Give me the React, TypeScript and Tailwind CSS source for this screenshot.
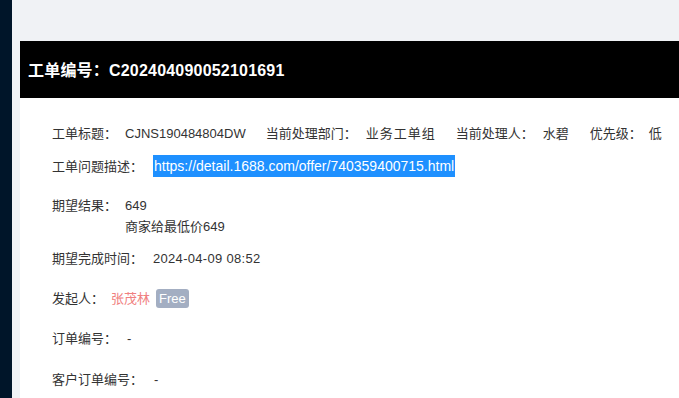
import React from "react";

const font = { fontFamily: '"Liberation Sans", "Noto Sans CJK SC", sans-serif' };

function Pair({ label, value, gap = "ml-[8px]" }: { label: string; value: React.ReactNode; gap?: string }) {
  return (
    <div className="flex items-center whitespace-nowrap">
      <span>{label}</span>
      <span className={gap}>{value}</span>
    </div>
  );
}

export default function App() {
  return (
    <div className="flex h-[398px] w-[679px] overflow-hidden bg-[#f0f2f5] text-[13px] leading-[21px] text-[#333]" style={font}>
      <div className="h-full w-[12px] shrink-0 bg-[#001529]" />
      <div className="flex min-w-0 flex-1 flex-col pl-[8px] pt-[41px]">
        <div className="flex h-[57px] w-[700px] shrink-0 items-center bg-black pl-[8px] pt-[2px] text-[16px] font-bold tracking-[0.2px] text-white">
          工单编号：C202404090052101691
        </div>
        <div className="w-[700px] flex-1 bg-white pl-[32px] pt-[25px]">
          <div className="flex items-center whitespace-nowrap">
            <Pair label="工单标题：" value="CJNS190484804DW" />
            <div className="ml-[20px]">
              <Pair label="当前处理部门：" value="业务工单组" gap="ml-[9px] tracking-[1px]" />
            </div>
            <div className="ml-[20px]">
              <Pair label="当前处理人：" value="水碧" gap="ml-[9px]" />
            </div>
            <div className="ml-[21px]">
              <Pair label="优先级：" value="低" gap="ml-[7px]" />
            </div>
          </div>
          <div className="mt-[11px] flex items-center whitespace-nowrap">
            <span>工单问题描述：</span>
            <span className="ml-[10px] bg-[#1e90ff] pl-[1px] pr-[1px] text-[14px] leading-[22px] text-white">
              https://detail.1688.com/offer/740359400715.html
            </span>
          </div>
          <div className="mt-[18px] flex whitespace-nowrap">
            <span>期望结果：</span>
            <div className="ml-[8px] flex flex-col">
              <span>649</span>
              <span>商家给最低价649</span>
            </div>
          </div>
          <div className="mt-[11px]">
            <Pair label="期望完成时间：" value="2024-04-09 08:52" gap="ml-[10px] tracking-[0.3px]" />
          </div>
          <div className="mt-[19px] flex items-center whitespace-nowrap">
            <span>发起人：</span>
            <span className="ml-[7px] text-[#f08080]">张茂林</span>
            <span className="ml-[6px] rounded-[3px] bg-[#a3aec2] px-[3px] text-[13px] leading-[19px] text-white">Free</span>
          </div>
          <div className="mt-[19px]">
            <Pair label="订单编号：" value="-" gap="ml-[10px]" />
          </div>
          <div className="mt-[20px]">
            <Pair label="客户订单编号：" value="-" gap="ml-[11px]" />
          </div>
        </div>
      </div>
    </div>
  );
}
